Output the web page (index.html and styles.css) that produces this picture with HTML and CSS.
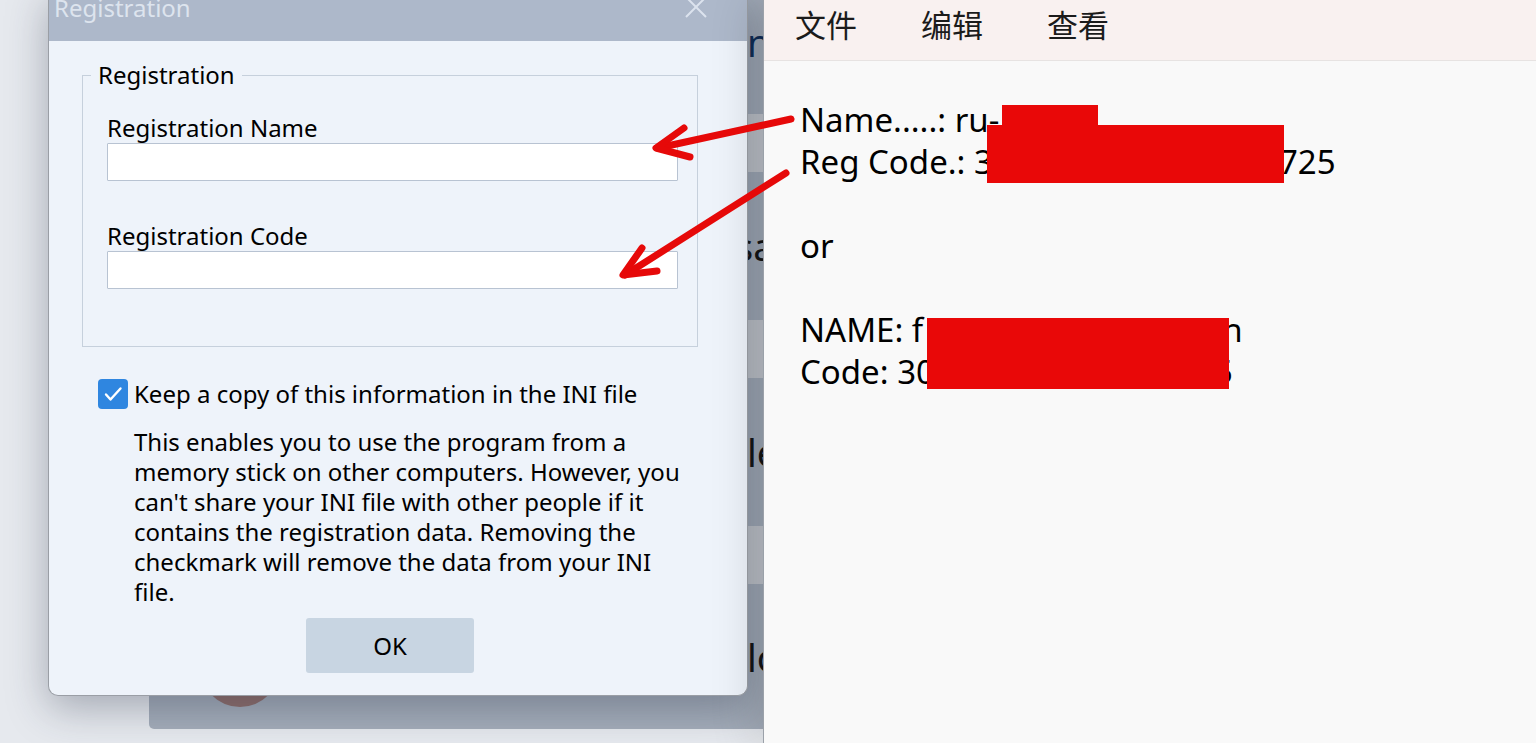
FILE: index.html
```html
<!DOCTYPE html>
<html lang="en">
<head>
    <meta charset="UTF-8">
    <title>Registration</title>
    <link rel="stylesheet" href="styles.css">
</head>
<body>

    <!-- app window behind the dialog -->
    <div class="desk">
        <div class="list">
            <div class="item first"><span class="item-text link">name</span></div>
            <div class="sep"></div>
            <div class="item shift"><span class="item-text">sample</span></div>
            <div class="sep"></div>
            <div class="item"><span class="item-text">level</span></div>
            <div class="sep"></div>
            <div class="item last"><span class="avatar"></span><span class="item-text">locale</span></div>
        </div>

        <div class="dialog">
            <div class="titlebar">
                <span class="title">Registration</span>
                <svg class="close" width="24" height="24" viewBox="0 0 24 24">
                    <path d="M2 2 L22 22 M22 2 L2 22" stroke="#dce3ee" stroke-width="2" fill="none"/>
                </svg>
            </div>
            <div class="dialog-body">
                <fieldset class="group">
                    <legend>Registration</legend>
                    <label class="field-label">Registration Name</label>
                    <input class="field" type="text">
                    <label class="field-label code">Registration Code</label>
                    <input class="field" type="text">
                </fieldset>

                <div class="check-row">
                    <span class="checkbox">
                        <svg width="30" height="30" viewBox="0 0 30 30">
                            <path d="M8 15.5 L12.5 20.5 L22.5 9.5" stroke="#fff" stroke-width="2.4" fill="none" stroke-linecap="round" stroke-linejoin="round"/>
                        </svg>
                    </span>
                    <span>Keep a copy of this information in the INI file</span>
                </div>

                <p class="note">
                    This enables you to use the program from a<br>
                    memory stick on other computers. However, you<br>
                    can't share your INI file with other people if it<br>
                    contains the registration data. Removing the<br>
                    checkmark will remove the data from your INI<br>
                    file.
                </p>

                <button class="ok-btn">OK</button>
            </div>
        </div>
    </div>

    <!-- notepad window -->
    <div class="notepad">
        <div class="menu">
            <span>文件</span>
            <span>编辑</span>
            <span>查看</span>
        </div>
        <div class="doc">
            <div class="line">Name.....: ru-</div>
            <div class="line">Reg Code.: 3<span class="hidden-part w1"></span>725</div>
            <div class="line">&nbsp;</div>
            <div class="line">or</div>
            <div class="line">&nbsp;</div>
            <div class="line">NAME: f<span class="hidden-part w2"></span>n</div>
            <div class="line">Code: 30<span class="hidden-part w3"></span>5</div>
        </div>
        <div class="redact r1"></div>
        <div class="redact r2"></div>
        <div class="redact r3"></div>
    </div>

    <!-- annotation arrows -->
    <svg class="arrows" width="1536" height="743" viewBox="0 0 1536 743">
        <g stroke="#e60909" stroke-width="7" fill="none" stroke-linecap="round" stroke-linejoin="round">
            <path d="M791 119 L658 148"/>
            <path d="M684 128 L656 148 L690 157"/>
            <path d="M786 173 L625 275"/>
            <path d="M642 248 L623 275 L657 271"/>
        </g>
    </svg>

</body>
</html>
```

FILE: styles.css
```css
* {
    margin: 0;
    padding: 0;
    box-sizing: border-box;
}

body {
    position: relative;
    display: flex;
    width: 1536px;
    height: 743px;
    overflow: hidden;
    background: #f9f9f9;
}

/* background app */
.desk {
    position: relative;
    width: 763px;
    flex-shrink: 0;
    overflow: hidden;
    background: #e6e9ee;
}

.list {
    display: flex;
    flex-direction: column;
    margin-left: 149px;
    width: 700px;
    height: 729px;
    border-radius: 0 0 0 5px;
    background: #a4adba;
    font-family: "Noto Sans", sans-serif;
    font-size: 38px;
    color: #111;
}

.item {
    display: flex;
    align-items: center;
    height: 148px;
    padding-left: 598px;
}

.item.shift {
    padding-left: 586px;
}

.item.first {
    height: 114px;
    align-items: flex-start;
    padding-top: 16px;
}

.item.last {
    flex: 1;
    padding-left: 51px;
}

.sep {
    height: 58px;
    background: #c5c9cf;
}

.item-text {
    white-space: nowrap;
}

.link {
    color: #0b2a55;
}

.avatar {
    align-self: flex-end;
    width: 80px;
    height: 80px;
    margin: 0 467px 22px 0;
    border-radius: 50%;
    background: #8f6e6b;
    flex-shrink: 0;
}

/* dialog */
.dialog {
    position: absolute;
    left: 48px;
    top: -10px;
    width: 700px;
    height: 706px;
    background: #eef3fa;
    border: 1px solid #9a9ea5;
    border-top: none;
    border-radius: 0 0 10px 10px;
    box-shadow: 0 12px 40px rgba(40, 50, 70, 0.35);
    font-family: "Noto Sans", sans-serif;
    font-size: 24px;
    color: #000;
}

.titlebar {
    display: flex;
    justify-content: space-between;
    align-items: flex-start;
    height: 51px;
    padding: 2px 39px 0 5px;
    background: #adb8ca;
}

.title {
    font-size: 24px;
    line-height: 32px;
    color: #dde4ee;
}

.close {
    margin-top: 3px;
}

.dialog-body {
    padding: 20px 49px 0 33px;
}

.group {
    height: 286px;
    padding: 0 19px 0 24px;
    border: 1px solid #c6d0dc;
}

.group legend {
    margin-left: -16px;
    padding: 0 7px;
    line-height: 28px;
}

.field-label {
    display: block;
    margin-top: 24px;
    line-height: 30px;
}

.field-label.code {
    margin-top: 40px;
}

.field {
    display: block;
    width: 100%;
    height: 38px;
    background: #fff;
    border: 1px solid #b8c3d2;
    border-radius: 1px;
}

.check-row {
    display: flex;
    align-items: center;
    gap: 6px;
    margin: 32px 0 0 16px;
    line-height: 30px;
}

.checkbox {
    display: flex;
    width: 30px;
    height: 30px;
    border-radius: 4px;
    background: #2f86e0;
}

.note {
    margin: 18px 0 0 52px;
    line-height: 30px;
}

.ok-btn {
    display: block;
    width: 168px;
    height: 55px;
    margin: 11px 0 0 224px;
    border: none;
    border-radius: 3px;
    background: #c8d5e2;
    font-family: "Noto Sans", sans-serif;
    font-size: 24px;
    color: #000;
}

/* notepad */
.notepad {
    position: relative;
    z-index: 1;
    flex: 1;
    border-left: 1px solid #9ba1a9;
    background: #f9f9f9;
    box-shadow: -12px 0 40px rgba(0, 0, 0, 0.13);
}

.menu {
    display: flex;
    gap: 64px;
    height: 61px;
    padding: 1px 0 0 31px;
    background: #f9f1f0;
    border-bottom: 1px solid #e7e3e2;
    font-family: "Noto Sans CJK SC", sans-serif;
    font-size: 31px;
    color: #1b1b1b;
}

.doc {
    padding: 38px 0 0 36px;
    font-family: "Noto Sans", sans-serif;
    font-size: 33px;
    line-height: 42px;
    color: #000;
}

.line {
    white-space: nowrap;
}

.hidden-part {
    display: inline-block;
}

.w1 { width: 286px; }
.w2 { width: 299px; }
.w3 { width: 279px; }

.redact {
    position: absolute;
    background: #e90808;
}

.r1 { left: 238px; top: 105px; width: 96px; height: 21px; }
.r2 { left: 223px; top: 125px; width: 297px; height: 58px; }
.r3 { left: 163px; top: 318px; width: 302px; height: 71px; }

.arrows {
    position: absolute;
    left: 0;
    top: 0;
    z-index: 2;
    pointer-events: none;
}
```
